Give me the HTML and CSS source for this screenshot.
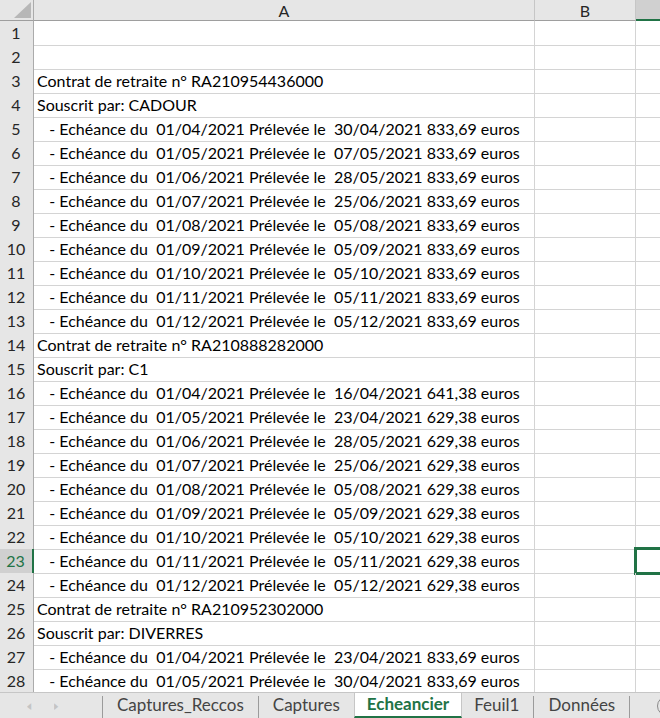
FILE: index.html
```html
<!DOCTYPE html>
<html lang="fr">
<head>
    <meta charset="UTF-8">
    <meta name="viewport" content="width=device-width, initial-scale=1.0">
    <title>Echeancier</title>
    <link rel="stylesheet" href="styles.css">
</head>
<body>
    <div class="sheet">
        <div class="row head">
            <div class="corner"><span class="corner__tri"></span></div>
            <div class="colh">A</div>
            <div class="colh">B</div>
            <div class="colh colh--sel"></div>
        </div>

        <div class="row"><div class="rh">1</div><div class="cell"></div><div class="cell"></div><div class="cell"></div></div>
        <div class="row"><div class="rh">2</div><div class="cell"></div><div class="cell"></div><div class="cell"></div></div>
        <div class="row"><div class="rh">3</div><div class="cell">Contrat de retraite n° RA210954436000</div><div class="cell"></div><div class="cell"></div></div>
        <div class="row"><div class="rh">4</div><div class="cell">Souscrit par: CADOUR</div><div class="cell"></div><div class="cell"></div></div>
        <div class="row"><div class="rh">5</div><div class="cell">   - Echéance du  01/04/2021 Prélevée le  30/04/2021 833,69 euros</div><div class="cell"></div><div class="cell"></div></div>
        <div class="row"><div class="rh">6</div><div class="cell">   - Echéance du  01/05/2021 Prélevée le  07/05/2021 833,69 euros</div><div class="cell"></div><div class="cell"></div></div>
        <div class="row"><div class="rh">7</div><div class="cell">   - Echéance du  01/06/2021 Prélevée le  28/05/2021 833,69 euros</div><div class="cell"></div><div class="cell"></div></div>
        <div class="row"><div class="rh">8</div><div class="cell">   - Echéance du  01/07/2021 Prélevée le  25/06/2021 833,69 euros</div><div class="cell"></div><div class="cell"></div></div>
        <div class="row"><div class="rh">9</div><div class="cell">   - Echéance du  01/08/2021 Prélevée le  05/08/2021 833,69 euros</div><div class="cell"></div><div class="cell"></div></div>
        <div class="row"><div class="rh">10</div><div class="cell">   - Echéance du  01/09/2021 Prélevée le  05/09/2021 833,69 euros</div><div class="cell"></div><div class="cell"></div></div>
        <div class="row"><div class="rh">11</div><div class="cell">   - Echéance du  01/10/2021 Prélevée le  05/10/2021 833,69 euros</div><div class="cell"></div><div class="cell"></div></div>
        <div class="row"><div class="rh">12</div><div class="cell">   - Echéance du  01/11/2021 Prélevée le  05/11/2021 833,69 euros</div><div class="cell"></div><div class="cell"></div></div>
        <div class="row"><div class="rh">13</div><div class="cell">   - Echéance du  01/12/2021 Prélevée le  05/12/2021 833,69 euros</div><div class="cell"></div><div class="cell"></div></div>
        <div class="row"><div class="rh">14</div><div class="cell">Contrat de retraite n° RA210888282000</div><div class="cell"></div><div class="cell"></div></div>
        <div class="row"><div class="rh">15</div><div class="cell">Souscrit par: C1</div><div class="cell"></div><div class="cell"></div></div>
        <div class="row"><div class="rh">16</div><div class="cell">   - Echéance du  01/04/2021 Prélevée le  16/04/2021 641,38 euros</div><div class="cell"></div><div class="cell"></div></div>
        <div class="row"><div class="rh">17</div><div class="cell">   - Echéance du  01/05/2021 Prélevée le  23/04/2021 629,38 euros</div><div class="cell"></div><div class="cell"></div></div>
        <div class="row"><div class="rh">18</div><div class="cell">   - Echéance du  01/06/2021 Prélevée le  28/05/2021 629,38 euros</div><div class="cell"></div><div class="cell"></div></div>
        <div class="row"><div class="rh">19</div><div class="cell">   - Echéance du  01/07/2021 Prélevée le  25/06/2021 629,38 euros</div><div class="cell"></div><div class="cell"></div></div>
        <div class="row"><div class="rh">20</div><div class="cell">   - Echéance du  01/08/2021 Prélevée le  05/08/2021 629,38 euros</div><div class="cell"></div><div class="cell"></div></div>
        <div class="row"><div class="rh">21</div><div class="cell">   - Echéance du  01/09/2021 Prélevée le  05/09/2021 629,38 euros</div><div class="cell"></div><div class="cell"></div></div>
        <div class="row"><div class="rh">22</div><div class="cell">   - Echéance du  01/10/2021 Prélevée le  05/10/2021 629,38 euros</div><div class="cell"></div><div class="cell"></div></div>
        <div class="row"><div class="rh rh--sel">23</div><div class="cell">   - Echéance du  01/11/2021 Prélevée le  05/11/2021 629,38 euros</div><div class="cell"></div><div class="cell cell--active"></div></div>
        <div class="row"><div class="rh">24</div><div class="cell">   - Echéance du  01/12/2021 Prélevée le  05/12/2021 629,38 euros</div><div class="cell"></div><div class="cell"></div></div>
        <div class="row"><div class="rh">25</div><div class="cell">Contrat de retraite n° RA210952302000</div><div class="cell"></div><div class="cell"></div></div>
        <div class="row"><div class="rh">26</div><div class="cell">Souscrit par: DIVERRES</div><div class="cell"></div><div class="cell"></div></div>
        <div class="row"><div class="rh">27</div><div class="cell">   - Echéance du  01/04/2021 Prélevée le  23/04/2021 833,69 euros</div><div class="cell"></div><div class="cell"></div></div>
        <div class="row"><div class="rh">28</div><div class="cell">   - Echéance du  01/05/2021 Prélevée le  30/04/2021 833,69 euros</div><div class="cell"></div><div class="cell"></div></div>
    </div>

    <div class="tabs">
        <div class="tabs__nav">
            <span class="tabs__arrow">&#9664;</span>
            <span class="tabs__arrow">&#9654;</span>
        </div>
        <div class="tab">Captures_Reccos</div>
        <div class="tab tab--before-active">Captures</div>
        <div class="tab tab--active">Echeancier</div>
        <div class="tab">Feuil1</div>
        <div class="tab">Données</div>
        <div class="tabs__add"></div>
    </div>
</body>
</html>
```

FILE: styles.css
```css
* {
	box-sizing: border-box;
	margin: 0;
	padding: 0;
}

:root {
	--grid: #d4d4d4;
	--head-bg: #e6e6e6;
	--head-line: #ababab;
	--sel-bg: #d0d0d0;
	--green: #217346;
	--text: #000;
}

body {
	width: 660px;
	height: 718px;
	overflow: hidden;
	background: #fff;
	font-family: Lato, "Liberation Sans", sans-serif;
	font-size: 16px;
	color: var(--text);
	display: flex;
	flex-direction: column;
}

.sheet {
	height: 692px;
	overflow: hidden;
	flex-shrink: 0;
}

.row {
	display: grid;
	grid-template-columns: 34px 501px 101px 100px;
	height: 24px;
}

.row.head {
	height: 21px;
}

/* column headers */
.corner,
.colh {
	background: var(--head-bg);
	border-right: 1px solid var(--head-line);
	border-bottom: 1px solid #9e9e9e;
	display: flex;
	align-items: center;
	justify-content: center;
	line-height: 1;
	padding-top: 1px;
}

.colh {
	border-right-color: #c6c6c6;
	color: #262626;
}

.colh--sel {
	background: var(--sel-bg);
	border-bottom: 2px solid var(--green);
}

.corner {
	position: relative;
}

.corner__tri {
	position: absolute;
	right: 2px;
	bottom: 2px;
	width: 17px;
	height: 16px;
	background: #b7b7b7;
	clip-path: polygon(100% 0, 100% 100%, 0 100%);
}

/* row headers */
.rh {
	background: var(--head-bg);
	border-right: 1px solid var(--head-line);
	border-bottom: 1px solid #c9c9c9;
	color: #262626;
	text-align: center;
	line-height: 24px;
	padding-right: 1px;
}

.rh--sel {
	background: var(--sel-bg);
	color: var(--green);
	border-right: 2px solid var(--green);
}

.cell {
	border-right: 1px solid var(--grid);
	border-bottom: 1px solid var(--grid);
	white-space: pre;
	line-height: 24px;
	padding-left: 3px;
}

.cell--active {
	outline: 3px solid var(--green);
	outline-offset: -2px;
	margin-left: -1px;
	margin-top: -1px;
}

/* sheet tabs */
.tabs {
	height: 26px;
	flex-shrink: 0;
	background: #e6e6e6;
	border-top: 1px solid #c6c6c6;
	display: flex;
	align-items: stretch;
	color: #444;
	font-size: 17px;
	overflow: hidden;
}

.tabs__nav {
	flex: 0 0 103px;
	display: flex;
	align-items: center;
	gap: 20px;
	padding: 0 0 4px 26px;
	border-right: 1px solid #9b9b9b;
	margin-top: 3px;
}

.tabs__arrow {
	font-size: 9px;
	transform: scaleX(0.6);
	color: #c4c4c4;
}

.tab {
	flex-shrink: 0;
	display: flex;
	align-items: center;
	padding: 0 14px 5px;
	border-right: 1px solid #9b9b9b;
	margin-top: 3px;
	line-height: 1;
	white-space: nowrap;
}

.tab--before-active {
	border-right: 0;
}

.tab--active {
	margin-top: -1px;
	background: #fff;
	color: var(--green);
	font-weight: bold;
	border-left: 1px solid #c6c6c6;
	border-right: 1px solid #c6c6c6;
	border-bottom: 2px solid var(--green);
	padding: 0 12px 2px;
}

.tab--active + .tab {
	padding-left: 12px;
}

.tabs__add {
	flex: 0 0 20px;
	margin: 3px 0 0 27px;
	height: 20px;
	border: 1px solid #8a8a8a;
	border-radius: 50%;
}
```
